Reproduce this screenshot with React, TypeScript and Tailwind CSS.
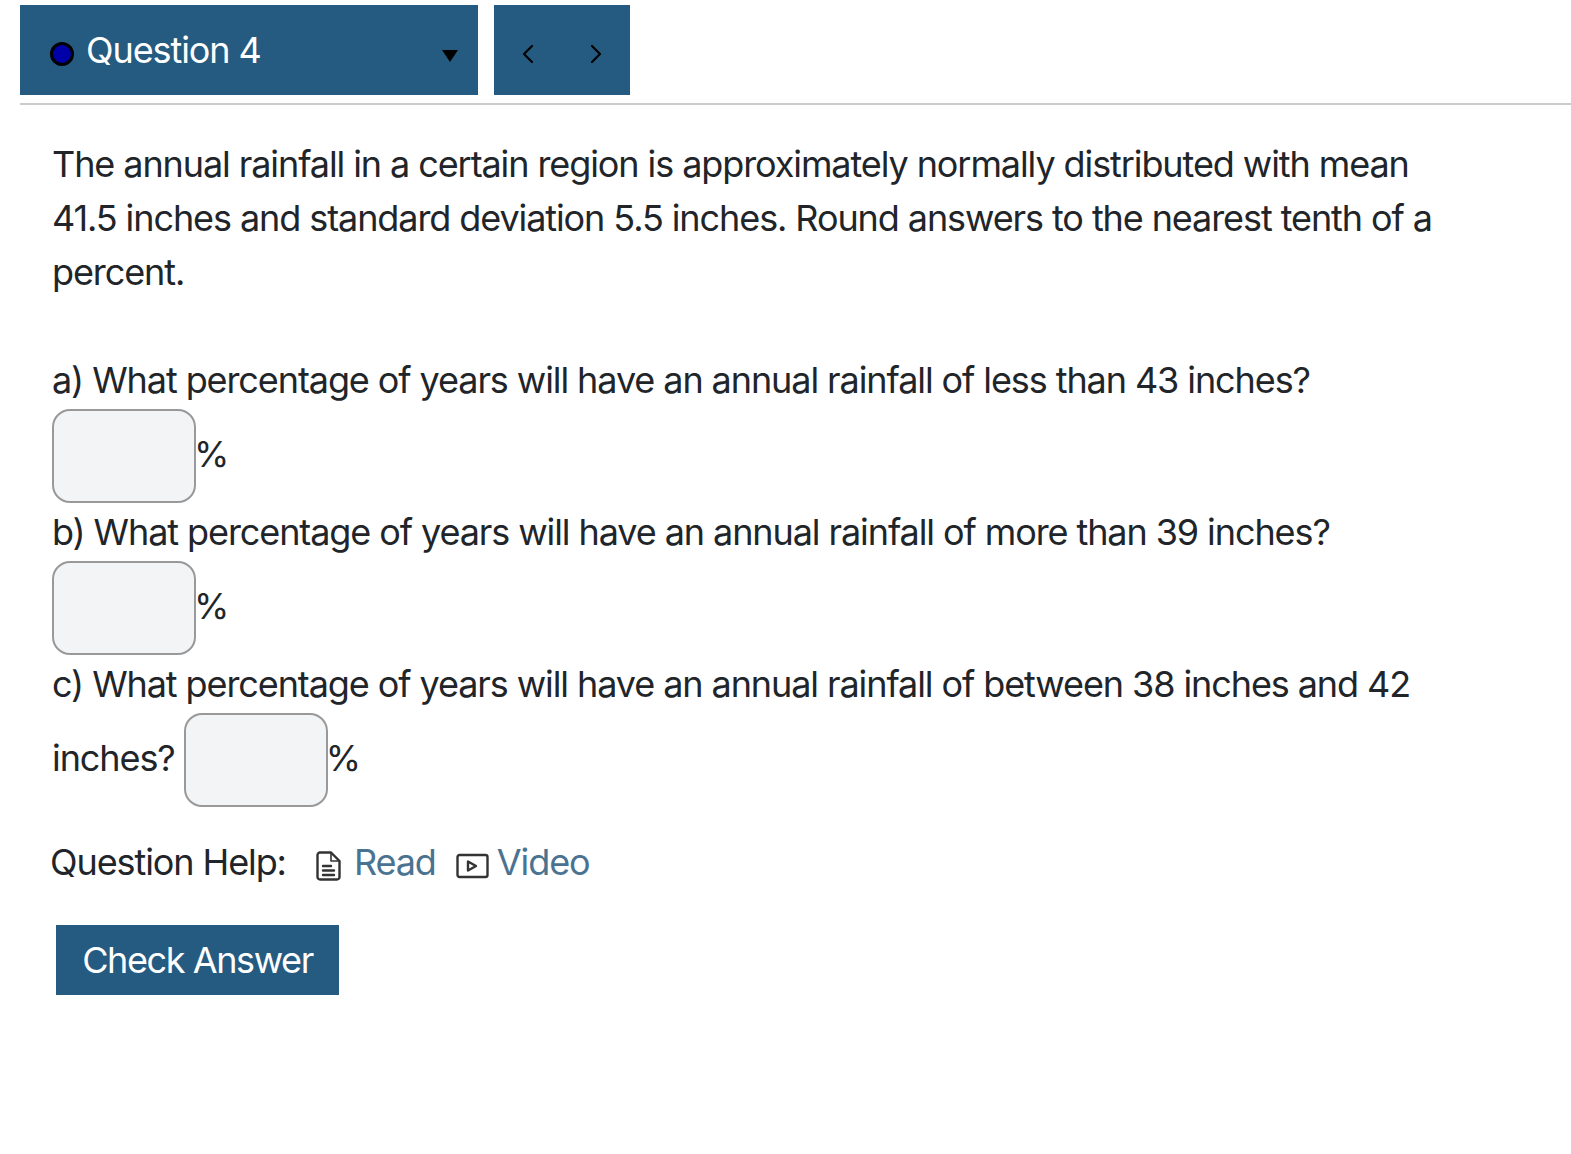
import React from "react";

function Answer() {
  return (
    <input
      type="text"
      aria-label="answer"
      className="my-[2px] -mr-[2px] inline-block h-[94px] w-[144px] rounded-[18px] border-2 border-[#999999] bg-[#f3f4f6] align-[-2px]"
    />
  );
}

function PageIcon() {
  return (
    <svg width="25" height="30" viewBox="0 0 25 30" fill="none" stroke="#333" strokeWidth="2.4" strokeLinejoin="round" strokeLinecap="round" className="ml-[30px] mr-[13px] mt-[16px] shrink-0">
      <path d="M4 1.5h11l8.5 8.500V26a2.500 2.500 0 0 1-2.500 2.500H4A2.500 2.500 0 0 1 1.500 26V4A2.500 2.500 0 0 1 4 1.500z" />
      <path d="M15 1.500V10h8.500" strokeWidth="1.600" />
      <path d="M7 15h8M7 19.500h11M7 24h11" />
    </svg>
  );
}

function VideoIcon() {
  return (
    <svg width="33" height="26" viewBox="0 0 33 26" fill="none" stroke="#333" strokeWidth="2.4" strokeLinejoin="round" className="ml-[20px] mr-[8px] mt-[18px] shrink-0">
      <rect x="1.500" y="2" width="30" height="22" rx="2" />
      <path d="M12 8.500v9l8-4.500z" />
    </svg>
  );
}

export default function App() {
  return (
    <div className="min-h-[1154px] bg-white pl-5 pt-[5px] font-['Inter','Liberation_Sans',sans-serif] text-[36px] leading-[54px] tracking-[-1.09px] text-[#212529]">
      <div className="flex gap-4">
        <div className="flex h-[90px] w-[458px] items-center bg-[#255b81] pl-[30px] pr-[20px] text-white">
          <span className="mt-2 h-[24px] w-[24px] rounded-full border-[3px] border-black bg-[#0000a8]" />
          <span className="ml-[12px] flex-1">Question 4</span>
          <svg width="16" height="12" viewBox="0 0 16 12" className="mt-[11px]"><path d="M0 0h16L8 12z" fill="#000" /></svg>
        </div>
        <div className="flex h-[90px] w-[136px] items-center justify-between bg-[#255b81] px-[28px] pt-2">
          <svg width="12" height="20" viewBox="0 0 12 20" fill="none" stroke="#000" strokeWidth="2.2" strokeLinecap="round" strokeLinejoin="round"><path d="M10 2l-8 8 8 8" /></svg>
          <svg width="12" height="20" viewBox="0 0 12 20" fill="none" stroke="#000" strokeWidth="2.2" strokeLinecap="round" strokeLinejoin="round"><path d="M2 2l8 8-8 8" /></svg>
        </div>
      </div>
      <div className="mt-2 h-[2px] bg-[#cccccc]" />
      <div className="pl-[32px] pr-[111px] pt-[32px]">
        <p>
          The annual rainfall in a certain region is approximately normally distributed with mean 41.5 inches and standard deviation 5.5 inches. Round answers to the nearest tenth of a percent.
        </p>
        <p className="mt-[54px]">a) What percentage of years will have an annual rainfall of less than 43 inches?</p>
        <p><Answer />%</p>
        <p>b) What percentage of years will have an annual rainfall of more than 39 inches?</p>
        <p><Answer />%</p>
        <p>c) What percentage of years will have an annual rainfall of between 38 inches and 42 inches? <Answer />%</p>
        <div className="mt-[26px] flex -ml-[2px]">
          <span>Question Help:</span>
          <PageIcon />
          <span className="text-[#4a7391]">Read</span>
          <VideoIcon />
          <span className="text-[#4a7391]">Video</span>
        </div>
        <button className="mt-[36px] ml-[4px] block h-[70px] w-[283px] bg-[#255b81] tracking-[-1.4px] text-white">Check Answer</button>
      </div>
    </div>
  );
}
